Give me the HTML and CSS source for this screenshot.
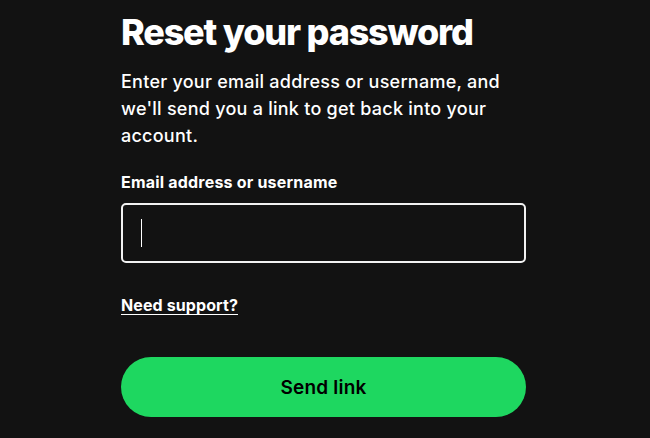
FILE: index.html
```html
<!DOCTYPE html>
<html lang="en">
<head>
<meta charset="utf-8">
<title>Reset your password</title>
<link rel="stylesheet" href="styles.css">
</head>
<body>
<main class="page">
  <form class="card">
    <h1 class="title">Reset your password</h1>
    <p class="intro">Enter your email address or username, and we'll send you a link to get back into your account.</p>
    <label class="label" for="user">Email address or username</label>
    <div class="field"><span class="caret"></span></div>
    <a class="support" href="#">Need support?</a>
    <button class="send" type="button">Send link</button>
  </form>
</main>
</body>
</html>
```
FILE: styles.css
```css
html, body {
  margin: 0;
  padding: 0;
  background: #121212;
}
body {
  width: 650px;
  height: 438px;
  overflow: hidden;
  font-family: Inter, "Liberation Sans", sans-serif;
  color: #ffffff;
}
.page {
  display: flex;
  justify-content: flex-start;
  padding-left: 121px;
}
.card {
  width: 405px;
  display: flex;
  flex-direction: column;
}
.title {
  margin: 8px 0 0 0;
  font-size: 36px;
  line-height: 48px;
  font-weight: 800;
  letter-spacing: -1.2px;
}
.intro {
  margin: 12px 0 0 0;
  font-size: 18px;
  line-height: 27px;
  font-weight: 500;
  letter-spacing: 0.25px;
}
.label {
  margin-top: 22px;
  font-size: 16px;
  line-height: 22px;
  font-weight: 700;
  letter-spacing: 0.2px;
}
.field {
  margin-top: 10px;
  height: 56px;
  border: 2px solid #f2f2f2;
  border-radius: 5px;
  display: flex;
  align-items: center;
  padding-left: 18px;
}
.caret {
  width: 1px;
  height: 28px;
  background: #ffffff;
}
.support {
  margin-top: 30px;
  align-self: flex-start;
  color: #ffffff;
  font-size: 16px;
  line-height: 24px;
  font-weight: 700;
  letter-spacing: 0.1px;
  text-decoration: underline;
  text-underline-offset: 3px;
}
.send {
  margin-top: 40px;
  height: 60px;
  border: none;
  border-radius: 30px;
  background: #1ed760;
  color: #000000;
  font-family: Inter, "Liberation Sans", sans-serif;
  font-size: 19px;
  font-weight: 600;
  letter-spacing: 0.2px;
}
```
